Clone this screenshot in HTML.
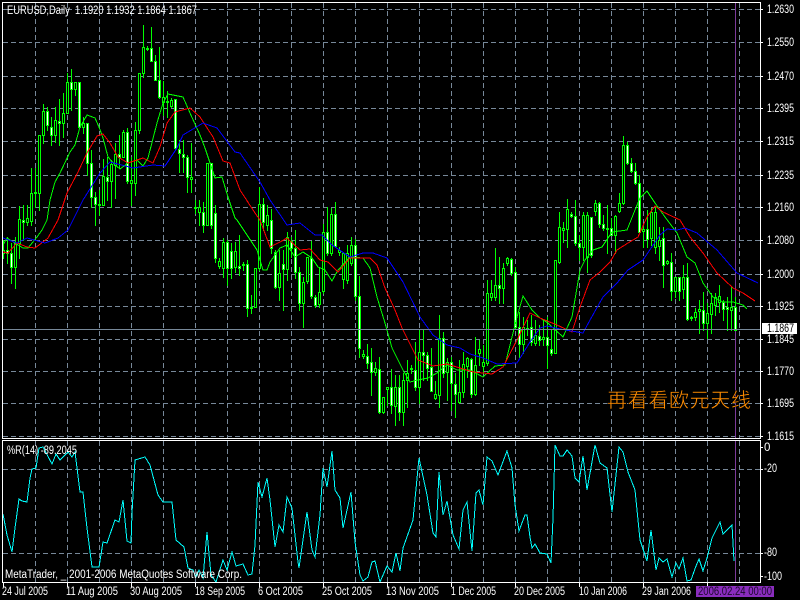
<!DOCTYPE html>
<html><head><meta charset="utf-8"><title>EURUSD,Daily</title>
<style>
html,body{margin:0;padding:0;background:#000;width:800px;height:600px;overflow:hidden}
svg{display:block}
text{font-family:"Liberation Sans","Noto Sans CJK SC",sans-serif;font-size:11.5px;fill:#fff}
</style></head><body>
<svg id="s" width="800" height="600" viewBox="0 0 800 600" xmlns="http://www.w3.org/2000/svg">
<rect width="800" height="600" fill="#000"/>
<g fill="none" stroke="#778899" shape-rendering="crispEdges" stroke-dasharray="5 3">
<path d="M3 9.5H760M3 42.5H760M3 76.5H760M3 108.5H760M3 141.5H760M3 175.5H760M3 207.5H760M3 240.5H760M3 274.5H760M3 306.5H760M3 339.5H760M3 371.5H760M3 403.5H760M3 436.5H760M3 469.5H760M3 553.5H760"/>
<path d="M35.5 3V438M67.5 3V438M99.5 3V438M131.5 3V438M163.5 3V438M195.5 3V438M227.5 3V438M259.5 3V438M291.5 3V438M323.5 3V438M355.5 3V438M387.5 3V438M419.5 3V438M451.5 3V438M483.5 3V438M515.5 3V438M547.5 3V438M579.5 3V438M611.5 3V438M643.5 3V438M675.5 3V438M707.5 3V438M739.5 3V438"/>
<path d="M35.5 441V582M67.5 441V582M99.5 441V582M131.5 441V582M163.5 441V582M195.5 441V582M227.5 441V582M259.5 441V582M291.5 441V582M323.5 441V582M355.5 441V582M387.5 441V582M419.5 441V582M451.5 441V582M483.5 441V582M515.5 441V582M547.5 441V582M579.5 441V582M611.5 441V582M643.5 441V582M675.5 441V582M707.5 441V582M739.5 441V582"/>
</g>
<path d="M735.5 3V438M735.5 441V582" stroke="#7b3a9a" fill="none" shape-rendering="crispEdges"/>
<g id="c" shape-rendering="crispEdges"></g>
<g fill="none" shape-rendering="crispEdges" stroke-width="1">
<polyline stroke="#00ff00" points="3,245 7,238 15,243 23,248 28,248 37,237 42,230 47,220 50,200 55,182 60,173 70,152 75,145 80,127 87,115 95,118 99,127 103,138 108,157 115,165 120,169 128,163 137,160 143,166 148,158 157,123 163,103 168,94 183,97 190,113 200,135 205,148 210,163 215,178 222,177 228,197 235,218 237,220 257,250 263,270 267,270 270,262 280,248 287,245 295,257 303,252 312,258 318,267 325,270 332,281 338,270 350,257 363,258 370,268 377,297 385,323 392,348 403,370 410,382 418,380 428,378 437,373 447,365 457,370 470,370 483,377 495,366 505,365 517,317 523,296 532,310 540,318 548,323 563,337 572,317 580,270 585,260 593,250 602,247 612,232 627,230 635,210 640,198 647,191 655,203 665,217 677,233 687,257 695,263 703,283 713,297 723,302 733,302 743,305 747,309"/>
<polyline stroke="#ff0000" points="3,252 8,253 17,243 27,247 35,248 43,242 48,238 58,220 67,193 78,172 87,153 97,136 103,134 110,143 118,157 128,163 143,158 153,163 160,147 167,123 175,112 190,108 200,117 213,137 223,161 230,163 240,190 255,213 260,220 270,247 280,242 287,238 300,250 310,249 320,260 328,262 338,272 350,258 370,258 377,265 385,288 395,310 402,328 413,350 418,360 433,366 447,364 460,368 473,372 483,373 492,374 503,367 517,340 530,313 540,318 557,325 572,332 580,307 590,280 600,272 610,262 617,250 628,243 638,237 647,217 655,206 663,212 680,220 690,237 703,253 717,273 733,288 743,293 755,301"/>
<polyline stroke="#0000ff" points="3,238 17,243 27,238 45,243 58,238 68,230 73,220 83,200 100,173 110,162 133,168 153,165 165,166 177,148 183,135 203,123 217,128 235,152 240,153 260,182 270,200 287,225 300,223 315,235 322,235 332,245 350,257 363,253 373,253 387,258 403,282 420,317 433,335 447,345 460,348 470,354 483,358 497,364 517,363 530,342 540,328 547,326 560,329 583,333 590,320 603,297 617,283 628,270 643,260 660,235 667,229 677,230 685,228 697,233 717,250 737,273 758,283"/>
<polyline stroke="#00ffff" points="3,514 7,535 12,552 15,528 19,499 22,501 27,502 30,478 32,469 36,468 39,448 43,447 52,464 56,454 60,460 68,452 72,457 75,452 77,468 80,492 83,492 87,528 92,567 99,567 103,542 107,543 115,520 119,522 123,500 127,541 131,543 132,513 135,460 145,457 150,465 158,495 163,502 172,502 176,540 184,547 188,568 193,570 196,577 199,570 203,578 207,532 211,575 216,582 223,560 227,570 232,552 236,566 243,564 248,575 252,574 255,545 258,482 262,497 267,478 270,500 275,547 279,525 283,532 287,497 292,508 298,562 299,568 307,512 312,550 315,557 320,515 323,468 327,487 332,451 335,490 340,498 343,528 351,492 355,542 360,575 363,581 368,577 372,562 375,561 380,582 387,566 392,572 396,553 400,571 403,548 413,520 419,458 427,495 433,533 436,537 439,472 443,515 447,501 453,535 459,549 463,510 467,502 472,551 476,493 479,490 483,505 487,457 492,461 498,475 507,451 512,468 515,505 519,531 525,515 527,515 530,537 532,548 535,544 540,553 547,554 551,563 553,518 555,445 560,456 563,456 567,450 572,456 575,478 579,482 583,456 587,490 595,445 600,463 607,468 612,512 619,447 623,452 628,472 635,490 640,540 647,561 651,530 656,570 659,558 663,562 667,559 672,577 676,563 679,569 683,558 687,581 691,580 696,566 699,559 703,571 707,558 712,538 720,522 723,534 732,525 734,561"/>
</g>
<g fill="none" shape-rendering="crispEdges">
<path d="M3 329.5H760" stroke="#778899"/>
<path d="M2.5 2.5H760.5V438.5H2.5ZM2.5 440.5H760.5V582.5H2.5Z" stroke="#fff"/>
<path d="M761 9.5h2M761 42.5h2M761 76.5h2M761 108.5h2M761 141.5h2M761 175.5h2M761 207.5h2M761 240.5h2M761 274.5h2M761 306.5h2M761 339.5h2M761 371.5h2M761 403.5h2M761 436.5h2M761 447.5h2M761 469.5h2M761 553.5h2M761 576.5h2M3.5 583v4M67.5 583v4M131.5 583v4M195.5 583v4M259.5 583v4M323.5 583v4M387.5 583v4M451.5 583v4M515.5 583v4M579.5 583v4M643.5 583v4M707.5 583v4" stroke="#fff"/>
</g>
<rect x="762" y="323" width="35" height="11" fill="#fff"/>
<rect x="696" y="586" width="78" height="11" fill="#8a2dbe"/>
<text x="7" y="14" textLength="190" lengthAdjust="spacingAndGlyphs" xml:space="preserve">EURUSD,Daily  1.1920 1.1932 1.1864 1.1867</text>
<text x="7" y="454" textLength="70" lengthAdjust="spacingAndGlyphs">%R(14) -89.2045</text>
<text x="5" y="578" textLength="237" lengthAdjust="spacingAndGlyphs">MetaTrader, _ 2001-2006 MetaQuotes Software Corp.</text>
<g>
<text x="767" y="13" textLength="27" lengthAdjust="spacingAndGlyphs">1.2630</text>
<text x="767" y="46" textLength="27" lengthAdjust="spacingAndGlyphs">1.2550</text>
<text x="767" y="80" textLength="27" lengthAdjust="spacingAndGlyphs">1.2470</text>
<text x="767" y="112" textLength="27" lengthAdjust="spacingAndGlyphs">1.2395</text>
<text x="767" y="145" textLength="27" lengthAdjust="spacingAndGlyphs">1.2315</text>
<text x="767" y="179" textLength="27" lengthAdjust="spacingAndGlyphs">1.2235</text>
<text x="767" y="211" textLength="27" lengthAdjust="spacingAndGlyphs">1.2160</text>
<text x="767" y="244" textLength="27" lengthAdjust="spacingAndGlyphs">1.2080</text>
<text x="767" y="278" textLength="27" lengthAdjust="spacingAndGlyphs">1.2000</text>
<text x="767" y="310" textLength="27" lengthAdjust="spacingAndGlyphs">1.1925</text>
<text x="767" y="332" textLength="27" lengthAdjust="spacingAndGlyphs" style="fill:#000">1.1867</text>
<text x="767" y="343" textLength="27" lengthAdjust="spacingAndGlyphs">1.1845</text>
<text x="767" y="375" textLength="27" lengthAdjust="spacingAndGlyphs">1.1770</text>
<text x="767" y="407" textLength="27" lengthAdjust="spacingAndGlyphs">1.1695</text>
<text x="767" y="440" textLength="27" lengthAdjust="spacingAndGlyphs">1.1615</text>
<text x="764" y="451">0</text>
<text x="764" y="472" textLength="13" lengthAdjust="spacingAndGlyphs">-20</text>
<text x="764" y="556" textLength="13" lengthAdjust="spacingAndGlyphs">-80</text>
<text x="764" y="580" textLength="18" lengthAdjust="spacingAndGlyphs">-100</text>
</g>
<g>
<text x="2" y="595" textLength="46" lengthAdjust="spacingAndGlyphs">24 Jul 2005</text>
<text x="66" y="595" textLength="52" lengthAdjust="spacingAndGlyphs">11 Aug 2005</text>
<text x="130" y="595" textLength="52" lengthAdjust="spacingAndGlyphs">30 Aug 2005</text>
<text x="195" y="595" textLength="50" lengthAdjust="spacingAndGlyphs">18 Sep 2005</text>
<text x="258" y="595" textLength="45" lengthAdjust="spacingAndGlyphs">6 Oct 2005</text>
<text x="322" y="595" textLength="50" lengthAdjust="spacingAndGlyphs">25 Oct 2005</text>
<text x="386" y="595" textLength="53" lengthAdjust="spacingAndGlyphs">13 Nov 2005</text>
<text x="451" y="595" textLength="45" lengthAdjust="spacingAndGlyphs">1 Dec 2005</text>
<text x="514" y="595" textLength="51" lengthAdjust="spacingAndGlyphs">20 Dec 2005</text>
<text x="579" y="595" textLength="48" lengthAdjust="spacingAndGlyphs">10 Jan 2006</text>
<text x="642" y="595" textLength="49" lengthAdjust="spacingAndGlyphs">29 Jan 2006</text>
<text x="698" y="595" textLength="74" lengthAdjust="spacingAndGlyphs" style="fill:#1c0a2c">2006.02.24 00:00</text>
</g>
<text x="607" y="407" textLength="144" style="font-family:'Liberation Sans','WenQuanYi Zen Hei','Noto Sans CJK SC',sans-serif;font-size:20px;fill:#ff8c00;stroke:#000;stroke-width:.45px;paint-order:fill stroke">再看看欧元天线</text>
</svg>
<script>
// high,low,bodyTop,bodyBottom,type (1 = white filled, 0 = hollow)
var d=[240,258,250,253,0, 237,263,250,253,1, 243,283,253,267,1, 237,288,243,267,0, 206,258,219,243,0, 205,240,220,222,1, 205,225,218,222,0,
168,225,193,221,0, 168,207,192,193,1, 135,210,135,193,0, 104,143,111,135,0, 107,130,111,125,1, 117,145,127,135,1, 107,142,120,135,0, 99,145,121,123,1, 93,137,113,123,0, 73,113,82,113,0,
69,110,82,89,1, 82,95,82,89,0, 82,127,82,127,1, 117,133,123,127,0, 123,175,123,163,1, 150,207,163,197,1, 192,225,197,204,1, 190,215,204,205,0, 159,205,176,205,0, 157,200,177,181,1,
160,207,164,181,0, 143,198,154,165,0, 135,167,154,157,1, 130,157,132,157,0, 128,183,132,181,1, 157,205,180,183,0, 122,195,130,183,0, 73,133,73,130,0, 25,77,47,73,0, 46,50,48,49,1,
27,61,48,61,1, 55,80,61,80,1, 47,98,80,97,1, 81,115,97,102,0, 91,117,101,102,1, 98,107,100,106,0, 99,150,99,148,1, 140,172,149,153,1, 140,172,154,157,1, 155,192,157,177,1, 143,192,177,179,0,
200,213,207,208,0, 200,225,207,212,0, 202,232,212,225,1, 163,225,163,225,0, 163,228,163,225,1, 205,262,213,258,1, 258,268,261,266,0, 238,277,242,268,0, 240,285,242,268,1, 243,278,251,268,1, 242,272,251,267,0,
235,275,266,268,1, 262,270,264,265,0, 260,316,264,308,1, 295,313,307,308,0, 268,307,268,307,0, 187,270,204,268,0, 198,230,204,222,1, 205,230,215,225,0, 209,253,220,248,1, 250,288,252,287,1, 250,300,273,287,0,
250,310,264,269,1, 232,280,237,269,0, 237,257,241,248,1, 230,278,248,272,1, 267,310,272,303,1, 277,327,282,303,0, 257,283,257,281,0, 241,298,258,296,1, 295,307,297,305,1, 267,307,292,304,0, 224,293,232,291,0,
207,255,232,253,1, 208,255,214,253,0, 202,247,214,246,1, 247,255,250,252,0, 252,288,253,279,0, 245,283,253,280,0, 237,265,245,263,0, 239,300,245,296,1, 276,357,296,348,1, 350,358,354,356,0, 344,368,356,363,1,
348,395,362,372,1, 362,375,368,372,0, 357,413,369,412,1, 397,413,397,412,0, 387,405,387,389,0, 369,413,387,405,1, 375,425,387,406,0, 375,420,387,412,1, 373,425,380,412,0, 360,407,373,380,0, 365,373,368,369,0,
342,390,370,387,1, 330,403,352,387,0, 330,380,352,355,1, 352,380,355,368,1, 348,391,367,391,1, 381,399,394,398,0, 315,407,338,395,0, 332,377,338,373,1, 358,400,362,372,0, 357,410,362,383,1, 373,417,384,394,1,
360,403,392,402,0, 352,397,364,392,0, 357,377,358,366,0, 358,397,359,394,1, 337,395,365,394,0, 340,365,349,353,0, 345,373,362,366,0, 280,365,293,363,0, 280,300,293,297,0, 248,300,285,297,0, 257,303,285,288,1,
263,303,268,288,0, 257,265,258,263,0, 258,275,259,273,1, 267,328,272,327,1, 312,357,327,344,1, 317,353,327,344,0, 320,335,328,329,0, 315,345,327,342,1, 320,345,335,343,0, 325,345,336,340,1, 320,345,337,339,0,
317,368,337,345,1, 330,355,349,353,1, 260,353,260,353,0, 212,263,227,262,0, 222,242,228,230,0, 199,247,209,229,0, 212,217,214,216,1, 200,245,216,243,1, 235,260,243,247,1, 212,260,215,247,0, 212,272,215,257,0,
217,257,217,255,1, 200,215,203,211,0, 202,227,203,224,1, 215,230,224,228,1, 205,253,228,229,0, 218,235,228,235,1, 215,253,216,235,0, 193,212,203,211,0, 136,204,145,203,0, 142,164,145,163,1, 158,172,163,171,1,
163,184,171,183,1, 175,233,183,232,1, 225,247,229,231,0, 210,247,229,239,1, 208,245,212,238,0, 207,253,212,247,0, 227,260,240,246,0, 227,287,238,265,1, 260,264,261,263,0, 253,300,262,291,1, 277,297,277,291,0,
277,300,277,291,1, 265,298,277,289,0, 263,320,277,319,1, 316,320,317,318,1, 308,320,312,317,0, 300,333,309,311,0, 292,330,310,323,1, 303,338,313,323,0, 293,333,303,314,0, 293,315,297,305,0, 285,312,296,302,0,
300,320,302,309,1, 297,330,307,309,1, 287,330,307,310,0, 297,330,307,330,1];
var w='',lb='',wc='',bc='',i,x,h,l,t,b,k;
for(i=0;i<d.length/5;i++){x=3+4*i+.5;h=d[i*5];l=d[i*5+1];t=d[i*5+2];b=d[i*5+3];k=d[i*5+4];
w+='M'+x+' '+h+'V'+(l+1);lb+='M'+(x-1.5)+' '+t+'h3V'+(b+1)+'h-3Z';
if(b-t>=2){if(k)wc+='M'+x+' '+(t+1)+'V'+b;else bc+='M'+x+' '+(t+1)+'V'+b;}}
document.getElementById('c').innerHTML='<path d="'+w+'" stroke="#00ff00" fill="none"/><path d="'+lb+'" fill="#00ff00"/><path d="'+bc+'" stroke="#000" fill="none"/><path d="'+wc+'" stroke="#fff" fill="none"/>';
</script>
</body></html>
